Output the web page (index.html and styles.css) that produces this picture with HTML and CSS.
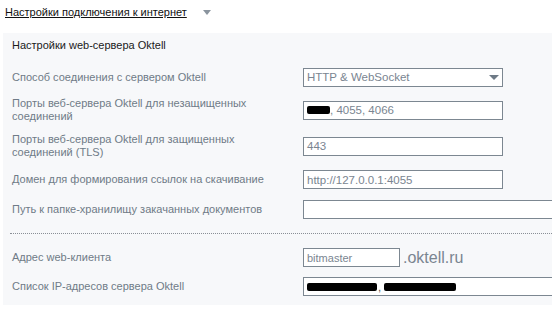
FILE: index.html
```html
<!DOCTYPE html>
<html>
<head>
<meta charset="utf-8">
<link rel="stylesheet" href="styles.css">
</head>
<body>
<div class="title-bar">
  <span class="title">Настройки подключения к интернет</span>
  <span class="title-arrow"></span>
</div>
<div class="panel">
  <div class="panel-head">Настройки web-сервера Oktell</div>
  <div class="row r1">
    <div class="label">Способ соединения с сервером Oktell</div>
    <div class="select"><span class="val">HTTP &amp; WebSocket</span><span class="sel-arrow"></span></div>
  </div>
  <div class="row r2">
    <div class="label">Порты веб-сервера Oktell для незащищенных соединений</div>
    <div class="input"><span class="blot b1"></span><span class="val">, 4055, 4066</span></div>
  </div>
  <div class="row r3">
    <div class="label">Порты веб-сервера Oktell для защищенных соединений (TLS)</div>
    <div class="input"><span class="val">443</span></div>
  </div>
  <div class="row r4">
    <div class="label">Домен для формирования ссылок на скачивание</div>
    <div class="input"><span class="val">http://127.0.0.1:4055</span></div>
  </div>
  <div class="row r5">
    <div class="label">Путь к папке-хранилищу закачанных документов</div>
    <div class="input wide"></div>
  </div>
  <div class="sep"></div>
  <div class="row r6">
    <div class="label">Адрес web-клиента</div>
    <div class="input short"><span class="val small">bitmaster</span></div>
    <span class="domain">.oktell.ru</span>
  </div>
  <div class="row r7">
    <div class="label">Список IP-адресов сервера Oktell</div>
    <div class="input wide"><span class="blot b2"></span><span class="val comma">, </span><span class="blot b3"></span></div>
  </div>
</div>
</body>
</html>
```
FILE: styles.css
```css
html, body {
  margin: 0;
  padding: 0;
  background: #ffffff;
  font-family: "Liberation Sans", Arial, sans-serif;
  font-size: 11px;
  overflow: hidden;
}
.title-bar {
  height: 33px;
  display: flex;
  align-items: flex-start;
  padding-left: 5px;
  box-sizing: border-box;
  padding-top: 5px;
}
.title {
  color: #111;
  text-decoration: underline;
  line-height: 14px;
}
.title-arrow {
  margin-left: 16px;
  margin-top: 5px;
  width: 0;
  height: 0;
  border-left: 4px solid transparent;
  border-right: 4px solid transparent;
  border-top: 5px solid #8a949e;
}
.panel {
  margin-left: 3px;
  background: #f7f8fa;
  padding: 5px 0 4px 9px;
  width: 560px;
}
.panel-head {
  color: #1a1a1a;
  line-height: 14px;
  height: 24px;
}
.row {
  display: flex;
  align-items: center;
}
.r1 { height: 30px; }
.r2 { height: 36px; }
.r3 { height: 36px; }
.r4 { height: 31px; }
.r5 { height: 29px; }
.r6 { height: 29px; margin-top: 9px; }
.r7 { height: 29px; }
.label {
  width: 291px;
  flex: none;
  color: #6f7b87;
  line-height: 13px;
  padding-right: 8px;
  box-sizing: border-box;
}
.select, .input {
  width: 200px;
  height: 19px;
  box-sizing: border-box;
  border: 1px solid #7c8791;
  background: #fff;
  display: flex;
  align-items: center;
  padding-left: 3px;
  flex: none;
}
.select { position: relative; }
.val {
  color: #7a8591;
  font-size: 11.5px;
  white-space: pre;
}
.val.small { font-size: 11px; }
.val.comma { margin-left: 1px; color: #555; }
.sel-arrow {
  position: absolute;
  right: 3px;
  top: 6px;
  width: 0;
  height: 0;
  border-left: 5px solid transparent;
  border-right: 5px solid transparent;
  border-top: 5px solid #6e7a86;
}
.input.wide { width: 260px; }
.input.short { width: 97px; }
.blot {
  display: inline-block;
  background: #000;
  height: 8px;
  border-radius: 2px;
}
.b1 { width: 23px; }
.b2 { width: 70px; }
.b3 { width: 72px; }
.domain {
  margin-left: 3px;
  color: #7a8591;
  font-size: 16px;
}
.sep {
  margin-top: 9px;
  margin-left: -2px;
  border-top: 1px dotted #8a8f96;
}
```
